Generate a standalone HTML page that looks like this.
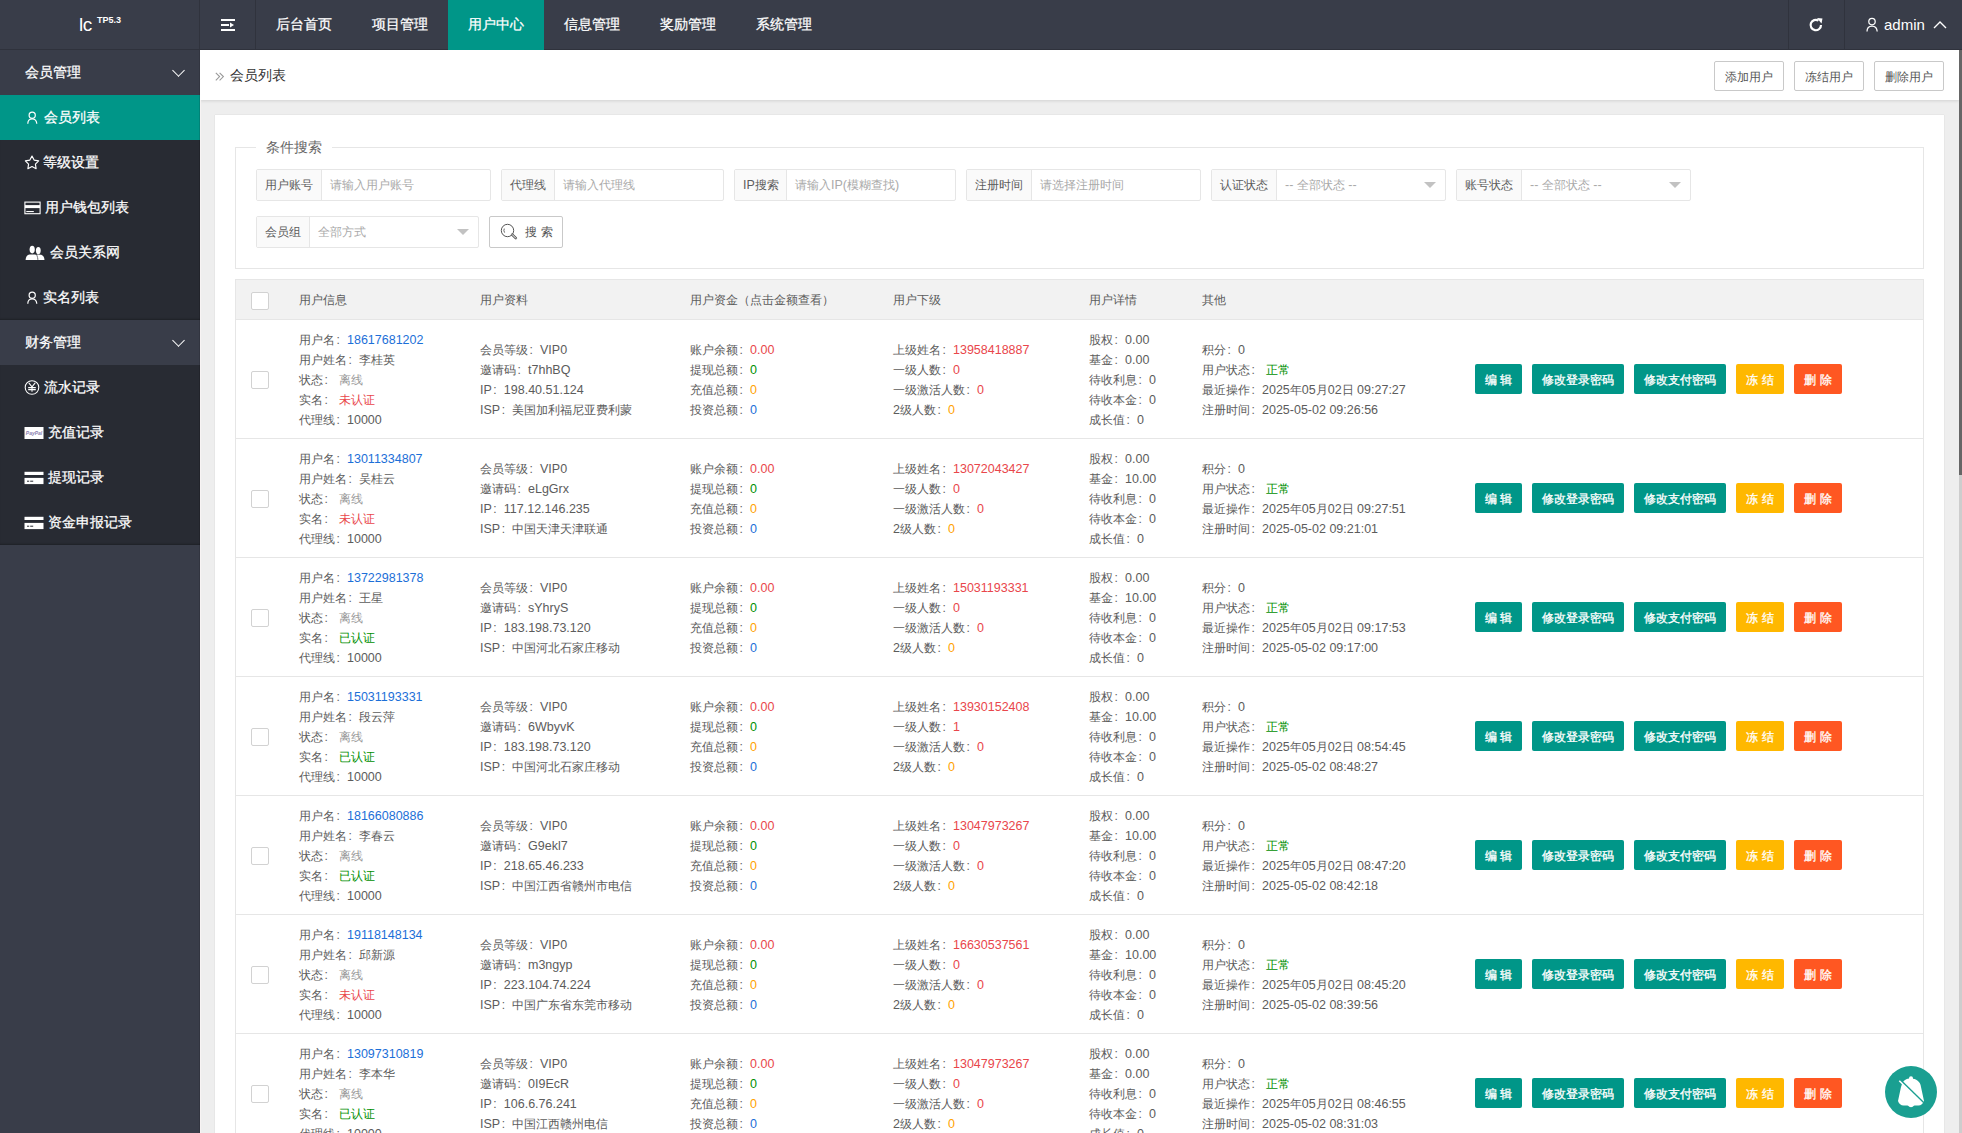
<!DOCTYPE html><html><head><meta charset="utf-8"><title>会员列表</title><style>
*{box-sizing:border-box;margin:0;padding:0}
html,body{width:1962px;height:1133px;overflow:hidden}
body{position:relative;background:#eeeeee;font-family:"Liberation Sans",sans-serif;color:#5c5c5c;font-size:12px}
.abs{position:absolute}
#hdr{left:0;top:0;width:1962px;height:50px;background:#393D49;border-bottom:1px solid #2f323c}
#logo{left:0;top:0;width:200px;height:49px;color:#fff}
#logo .l{position:absolute;left:79px;top:14px;font-size:19px;line-height:22px;letter-spacing:-0.5px}
#logo .v{position:absolute;left:97px;top:14px;font-size:9px;line-height:12px;font-weight:bold}
.vsep{position:absolute;top:0;width:1px;height:49px;background:#30333d}
.nav{position:absolute;top:0;height:49px;line-height:49px;color:#fff;font-size:14px;text-align:center;width:96px;-webkit-text-stroke:0.25px #fff}
.nav.on{background:#009688;height:50px}
#side{left:0;top:50px;width:200px;height:1083px;background:#393D49}
.grp{position:absolute;left:0;width:200px;height:45px;line-height:45px;color:#fff;font-size:14px;padding-left:25px;-webkit-text-stroke:0.25px #fff}
.grp .chev{position:absolute;left:173.5px;top:16px;width:9px;height:9px;border-right:1.5px solid #fff;border-bottom:1.5px solid #fff;transform:rotate(45deg)}
.sub{position:absolute;left:0;width:200px;background:#282B33;box-shadow:inset 0 -2px 2px -1px rgba(0,0,0,.25)}
.it{position:absolute;left:0;width:200px;height:45px;line-height:45px;color:#fff;font-size:14px}
.it.on{background:#009688}
.it svg{position:absolute}
.it span{position:absolute;top:0;-webkit-text-stroke:0.25px #fff}
#main{left:200px;top:50px;width:1759px;height:1083px;background:#eeeeee;overflow:hidden}
#crumb{position:absolute;left:0;top:0;width:1759px;height:50px;background:#fff;box-shadow:0 1px 3px rgba(0,0,0,.12)}
#crumb .t{position:absolute;left:30px;top:0;line-height:50px;font-size:14px;color:#333}
#crumb .r{position:absolute;left:15px;top:0;line-height:50px;font-size:14px;color:#999}
.tb{position:absolute;top:11px;height:30px;width:70px;border:1px solid #c9c9c9;background:#fff;line-height:30px;text-align:center;font-size:12px;color:#555;border-radius:2px}
#card{position:absolute;left:15px;top:65px;width:1729px;height:1100px;background:#fff;box-shadow:0 0 1px rgba(0,0,0,.18)}
#fs{position:absolute;left:20px;top:32px;width:1689px;height:122px;border:1px solid #e6e6e6}
#legend{position:absolute;left:20px;top:-11px;padding:0 10px;background:#fff;font-size:14px;line-height:20px;color:#666}
.ip{position:absolute;height:32px;border:1px solid #e6e6e6;border-radius:2px;background:#fff}
.ip .lb{position:absolute;left:0;top:0;height:30px;line-height:31px;background:#fafafa;border-right:1px solid #e6e6e6;color:#5c5c5c;padding-left:8px;font-size:12px}
.ip .ph{position:absolute;top:0;line-height:31px;color:#aaa;font-size:12px}
.ip .tri{position:absolute;top:12px;width:0;height:0;border-left:6px solid transparent;border-right:6px solid transparent;border-top:6px solid #c2c2c2}
#sbtn{position:absolute;left:274px;top:101px;width:74px;height:32px;border:1px solid #c9c9c9;border-radius:2px;background:#fff;color:#555;font-size:12px}
#tbl{position:absolute;left:20px;top:164px;width:1689px;border:1px solid #e6e6e6;border-bottom:none}
.th{position:relative;height:40px;background:#f2f2f2;border-bottom:1px solid #e6e6e6}
.tr{position:relative;height:119px;border-bottom:1px solid #e6e6e6;background:#fff}
.ck{position:absolute;left:15px;width:18px;height:18px;border:1px solid #d2d2d2;border-radius:2px;background:#fff}
.hc{position:absolute;top:1px;line-height:39px;font-size:12px;color:#5c5c5c}
.cell{position:absolute;line-height:20px;font-size:12px;color:#5c5c5c;white-space:nowrap}
.blue{color:#1c6fd8}
.red{color:#e9464b}
.green{color:#008f00}
.org{color:#ffa200}
.gray{color:#999}
.l{font-size:12.5px}
.c{display:inline-block;width:12px;font-style:normal;padding-left:1.5px}
.btn{position:absolute;height:30px;line-height:32px;color:#fff;font-size:12px;text-align:center;border-radius:2px;-webkit-text-stroke:0.3px #fff}
.bt{background:#009688}
.by{background:#FFB800}
.br{background:#FF5722}
#sb{left:1959px;top:50px;width:3px;height:1083px;background:#cdcdcd}
#sbt{left:1959px;top:50px;width:3px;height:425px;background:#666}
#fab{left:1885px;top:1066px;width:52px;height:52px;border-radius:50%;background:#1a9f91}
</style></head><body>
<div id="hdr" class="abs">
<div id="logo" class="abs"><span class="l">lc</span><span class="v">TP5.3</span></div>
<div class="vsep" style="left:199px"></div><div class="vsep" style="left:255px"></div>
<svg class="abs" style="left:221px;top:18px" width="16" height="14" viewBox="0 0 16 14"><rect x="0" y="1" width="14" height="2" fill="#fff"/><rect x="0" y="6" width="8" height="2" fill="#fff"/><path d="M9 4.5 L13 7 L9 9.5Z" fill="#fff"/><rect x="0" y="11" width="14" height="2" fill="#fff"/></svg>
<div class="nav" style="left:256px">后台首页</div>
<div class="nav" style="left:352px">项目管理</div>
<div class="nav on" style="left:448px">用户中心</div>
<div class="nav" style="left:544px">信息管理</div>
<div class="nav" style="left:640px">奖励管理</div>
<div class="nav" style="left:736px">系统管理</div>
<div class="vsep" style="left:1788px"></div><div class="vsep" style="left:1844px"></div>
<svg class="abs" style="left:1808px;top:17px" width="16" height="16" viewBox="0 0 16 16"><path d="M13 8 A5.2 5.2 0 1 1 10.5 3.6" fill="none" stroke="#fff" stroke-width="2.2"/><path d="M9 1 L14.5 1.5 L13.5 6.5Z" fill="#fff"/></svg>
<svg class="abs" style="left:1865px;top:17px" width="14" height="15" viewBox="0 0 14 15"><circle cx="7" cy="4.6" r="3.2" fill="none" stroke="#fff" stroke-width="1.25"/><path d="M2 14.5 C2 11 4 9 7 9 C10 9 12 11 12.2 14.5" fill="none" stroke="#fff" stroke-width="1.25"/></svg>
<div class="abs" style="left:1884px;top:0;line-height:49px;font-size:15px;color:#fff">admin</div>
<svg class="abs" style="left:1933px;top:20px" width="14" height="9" viewBox="0 0 14 9"><path d="M1 8 L7 2 L13 8" fill="none" stroke="#fff" stroke-width="1.4"/></svg>
</div>
<div id="side" class="abs">
<div class="grp" style="top:0">会员管理<i class="chev"></i></div>
<div class="sub" style="top:45px;height:225px"></div>
<div class="it on" style="top:45px"><svg style="position:absolute;left:24px;top:14px" width="16" height="17" viewBox="24 109 16 17"><circle cx="32.2" cy="115.2" r="3.1" fill="none" stroke="#fff" stroke-width="1.2"/><path d="M27.8 123.8 C27.8 120.6 29.6 119 32.2 119 C34.8 119 36.6 120.6 36.8 123.8" fill="none" stroke="#fff" stroke-width="1.2"/></svg><span style="left:44px">会员列表</span></div>
<div class="it" style="top:90px"><svg style="position:absolute;left:23px;top:13px" width="18" height="18" viewBox="23 153 18 18"><path d="M32.00 156.00 L34.12 160.09 L38.66 160.84 L35.42 164.11 L36.11 168.66 L32.00 166.60 L27.89 168.66 L28.58 164.11 L25.34 160.84 L29.88 160.09Z" fill="none" stroke="#fff" stroke-width="1.15" stroke-linejoin="round"/></svg><span style="left:43px">等级设置</span></div>
<div class="it" style="top:135px"><svg style="position:absolute;left:23px;top:15px" width="19" height="16" viewBox="23 200 19 16"><rect x="24.9" y="202.1" width="15.2" height="11.6" fill="none" stroke="#fff" stroke-width="1.1"/><rect x="25" y="205.1" width="15" height="3" fill="#fff"/><rect x="26.3" y="211" width="7.5" height="1.1" fill="#fff"/></svg><span style="left:45px">用户钱包列表</span></div>
<div class="it" style="top:180px"><svg style="position:absolute;left:24px;top:14px" width="22" height="17" viewBox="24 244 22 17"><ellipse cx="38.3" cy="250.6" rx="2.4" ry="3.6" fill="#fff"/><path d="M36.5 254.6 L41.2 254.8 C43.2 255.4 44.3 257 44.5 259.9 L39 259.9 Z" fill="#fff"/><ellipse cx="32.2" cy="249.6" rx="2.6" ry="3.8" fill="#fff"/><path d="M25.6 259.9 C25.7 256.8 27 254.8 29.5 254.4 L35 254.4 C37.5 254.8 38.8 256.8 39 259.9 Z" fill="#fff"/><path d="M35.6 253.5 C36.8 254.8 37.6 256 37.8 259.9" fill="none" stroke="#282B33" stroke-width="0.6"/></svg><span style="left:50px">会员关系网</span></div>
<div class="it" style="top:225px"><svg style="position:absolute;left:24px;top:14px" width="16" height="17" viewBox="24 289 16 17"><circle cx="32.2" cy="295.2" r="3.1" fill="none" stroke="#fff" stroke-width="1.2"/><path d="M27.8 303.8 C27.8 300.6 29.6 299 32.2 299 C34.8 299 36.6 300.6 36.8 303.8" fill="none" stroke="#fff" stroke-width="1.2"/></svg><span style="left:43px">实名列表</span></div>
<div class="grp" style="top:270px">财务管理<i class="chev"></i></div>
<div class="sub" style="top:315px;height:180px"></div>
<div class="it" style="top:315px"><svg style="position:absolute;left:23px;top:13px" width="18" height="19" viewBox="23 378 18 19"><circle cx="32" cy="387.5" r="6.8" fill="none" stroke="#fff" stroke-width="1.05"/><path d="M28.8 382.8 L32 386.8 L35.2 382.8 M32 386.8 L32 391.8 M28.2 387.6 H35.8 M28.2 389.6 H35.8" fill="none" stroke="#fff" stroke-width="1.05"/></svg><span style="left:44px">流水记录</span></div>
<div class="it" style="top:360px"><svg style="position:absolute;left:24px;top:16px" width="20" height="14" viewBox="24 426 20 14"><rect x="24.5" y="427" width="19" height="12" fill="#fff"/><text x="34" y="434.6" font-size="5" font-weight="bold" text-anchor="middle" fill="#8a7fb0" font-family="Liberation Sans" font-style="italic">PayPal</text></svg><span style="left:48px">充值记录</span></div>
<div class="it" style="top:405px"><svg style="position:absolute;left:24px;top:15px" width="20" height="16" viewBox="24 470 20 16"><rect x="24.5" y="471.8" width="19" height="3.2" fill="#fff"/><rect x="24.5" y="477.9" width="19" height="6.2" fill="#fff"/><rect x="27" y="480.7" width="2.2" height="1" fill="#282B33"/><rect x="30.2" y="480.7" width="3" height="1" fill="#282B33"/></svg><span style="left:48px">提现记录</span></div>
<div class="it" style="top:450px"><svg style="position:absolute;left:24px;top:15px" width="20" height="16" viewBox="24 515 20 16"><rect x="24.5" y="516.8" width="19" height="3.2" fill="#fff"/><rect x="24.5" y="522.9" width="19" height="6.2" fill="#fff"/><rect x="27" y="525.7" width="2.2" height="1" fill="#282B33"/><rect x="30.2" y="525.7" width="3" height="1" fill="#282B33"/></svg><span style="left:48px">资金申报记录</span></div>
</div>
<div id="main" class="abs">
<div id="crumb"><svg class="abs" style="left:15px;top:22px" width="10" height="10" viewBox="0 0 10 10"><path d="M0.8 0.8 L4.6 4.6 L0.8 8.4 M4.6 0.8 L8.4 4.6 L4.6 8.4" fill="none" stroke="#999" stroke-width="1.1"/></svg><span class="t">会员列表</span>
<div class="tb" style="left:1514px">添加用户</div>
<div class="tb" style="left:1594px">冻结用户</div>
<div class="tb" style="left:1674px">删除用户</div>
</div>
<div id="card">
<div id="fs"><div id="legend">条件搜索</div></div>
<div class="ip" style="left:41px;top:54px;width:235px"><div class="lb" style="width:65px">用户账号</div><div class="ph" style="left:73px">请输入用户账号</div></div>
<div class="ip" style="left:286px;top:54px;width:223px"><div class="lb" style="width:53px">代理线</div><div class="ph" style="left:61px">请输入代理线</div></div>
<div class="ip" style="left:519px;top:54px;width:222px"><div class="lb" style="width:52px"><span class="l">IP</span>搜索</div><div class="ph" style="left:60px">请输入<span class="l">IP(</span>模糊查找<span class="l">)</span></div></div>
<div class="ip" style="left:751px;top:54px;width:235px"><div class="lb" style="width:65px">注册时间</div><div class="ph" style="left:73px">请选择注册时间</div></div>
<div class="ip" style="left:996px;top:54px;width:235px"><div class="lb" style="width:65px">认证状态</div><div class="ph" style="left:73px"><span class="l">-- </span>全部状态<span class="l"> --</span></div><div class="tri" style="left:212px"></div></div>
<div class="ip" style="left:1241px;top:54px;width:235px"><div class="lb" style="width:65px">账号状态</div><div class="ph" style="left:73px"><span class="l">-- </span>全部状态<span class="l"> --</span></div><div class="tri" style="left:212px"></div></div>
<div class="ip" style="left:41px;top:101px;width:223px"><div class="lb" style="width:53px">会员组</div><div class="ph" style="left:61px">全部方式</div><div class="tri" style="left:200px"></div></div>
<div id="sbtn"><svg class="abs" style="left:10px;top:6px" width="18" height="18" viewBox="0 0 18 18"><circle cx="7.5" cy="7.5" r="6.2" fill="none" stroke="#555" stroke-width="1"/><path d="M4.3 5.6 A4 4 0 0 0 4.6 9.6" fill="none" stroke="#555" stroke-width="0.9"/><path d="M12.2 11.6 L15.8 15.2" stroke="#555" stroke-width="2.6" stroke-linecap="round"/><path d="M12.2 11.6 L15.8 15.2" stroke="#fff" stroke-width="1" stroke-linecap="round"/></svg><span class="abs" style="left:35px;top:0;line-height:30px;letter-spacing:4px">搜索</span></div>
<div id="tbl">
<div class="th"><div class="ck" style="top:12px"></div>
<div class="hc" style="left:63px">用户信息</div>
<div class="hc" style="left:244px">用户资料</div>
<div class="hc" style="left:454px">用户资金（点击金额查看）</div>
<div class="hc" style="left:657px">用户下级</div>
<div class="hc" style="left:853px">用户详情</div>
<div class="hc" style="left:966px">其他</div>
</div>
<div class="tr"><div class="ck" style="top:51px"></div>
<div class="cell" style="left:63px;top:10px">用户名<i class="c">:</i><span class="blue"><span class="l">18617681202</span></span><br>用户姓名<i class="c">:</i>李桂英<br>状态<i class="c">:</i><span class="gray" style="margin-left:4px">离线</span><br>实名<i class="c">:</i><span style="margin-left:4px"></span><span class="red">未认证</span><br>代理线<i class="c">:</i><span class="l">10000</span></div>
<div class="cell" style="left:244px;top:20px">会员等级<i class="c">:</i><span class="l">VIP0</span><br>邀请码<i class="c">:</i><span class="l">t7hhBQ</span><br><span class="l">IP</span><i class="c">:</i><span class="l">198.40.51.124</span><br><span class="l">ISP</span><i class="c">:</i>美国加利福尼亚费利蒙</div>
<div class="cell" style="left:454px;top:20px">账户余额<i class="c">:</i><span class="red"><span class="l">0.00</span></span><br>提现总额<i class="c">:</i><span class="green"><span class="l">0</span></span><br>充值总额<i class="c">:</i><span class="org"><span class="l">0</span></span><br>投资总额<i class="c">:</i><span class="blue"><span class="l">0</span></span></div>
<div class="cell" style="left:657px;top:20px">上级姓名<i class="c">:</i><span class="red"><span class="l">13958418887</span></span><br>一级人数<i class="c">:</i><span class="red"><span class="l">0</span></span><br>一级激活人数<i class="c">:</i><span class="red"><span class="l">0</span></span><br><span class="l">2</span>级人数<i class="c">:</i><span class="org"><span class="l">0</span></span></div>
<div class="cell" style="left:853px;top:10px">股权<i class="c">:</i><span class="l">0.00</span><br>基金<i class="c">:</i><span class="l">0.00</span><br>待收利息<i class="c">:</i><span class="l">0</span><br>待收本金<i class="c">:</i><span class="l">0</span><br>成长值<i class="c">:</i><span class="l">0</span></div>
<div class="cell" style="left:966px;top:20px">积分<i class="c">:</i><span class="l">0</span><br>用户状态<i class="c">:</i><span class="green" style="margin-left:4px">正常</span><br>最近操作<i class="c">:</i><span class="l">2025</span>年<span class="l">05</span>月<span class="l">02</span>日<span class="l"> 09:27:27</span><br>注册时间<i class="c">:</i><span class="l">2025-05-02 09:26:56</span></div>
<div class="btn bt" style="left:1239px;top:44px;width:47px">编 辑</div>
<div class="btn bt" style="left:1296px;top:44px;width:92px">修改登录密码</div>
<div class="btn bt" style="left:1398px;top:44px;width:92px">修改支付密码</div>
<div class="btn by" style="left:1500px;top:44px;width:48px">冻 结</div>
<div class="btn br" style="left:1558px;top:44px;width:48px">删 除</div>
</div>
<div class="tr"><div class="ck" style="top:51px"></div>
<div class="cell" style="left:63px;top:10px">用户名<i class="c">:</i><span class="blue"><span class="l">13011334807</span></span><br>用户姓名<i class="c">:</i>吴桂云<br>状态<i class="c">:</i><span class="gray" style="margin-left:4px">离线</span><br>实名<i class="c">:</i><span style="margin-left:4px"></span><span class="red">未认证</span><br>代理线<i class="c">:</i><span class="l">10000</span></div>
<div class="cell" style="left:244px;top:20px">会员等级<i class="c">:</i><span class="l">VIP0</span><br>邀请码<i class="c">:</i><span class="l">eLgGrx</span><br><span class="l">IP</span><i class="c">:</i><span class="l">117.12.146.235</span><br><span class="l">ISP</span><i class="c">:</i>中国天津天津联通</div>
<div class="cell" style="left:454px;top:20px">账户余额<i class="c">:</i><span class="red"><span class="l">0.00</span></span><br>提现总额<i class="c">:</i><span class="green"><span class="l">0</span></span><br>充值总额<i class="c">:</i><span class="org"><span class="l">0</span></span><br>投资总额<i class="c">:</i><span class="blue"><span class="l">0</span></span></div>
<div class="cell" style="left:657px;top:20px">上级姓名<i class="c">:</i><span class="red"><span class="l">13072043427</span></span><br>一级人数<i class="c">:</i><span class="red"><span class="l">0</span></span><br>一级激活人数<i class="c">:</i><span class="red"><span class="l">0</span></span><br><span class="l">2</span>级人数<i class="c">:</i><span class="org"><span class="l">0</span></span></div>
<div class="cell" style="left:853px;top:10px">股权<i class="c">:</i><span class="l">0.00</span><br>基金<i class="c">:</i><span class="l">10.00</span><br>待收利息<i class="c">:</i><span class="l">0</span><br>待收本金<i class="c">:</i><span class="l">0</span><br>成长值<i class="c">:</i><span class="l">0</span></div>
<div class="cell" style="left:966px;top:20px">积分<i class="c">:</i><span class="l">0</span><br>用户状态<i class="c">:</i><span class="green" style="margin-left:4px">正常</span><br>最近操作<i class="c">:</i><span class="l">2025</span>年<span class="l">05</span>月<span class="l">02</span>日<span class="l"> 09:27:51</span><br>注册时间<i class="c">:</i><span class="l">2025-05-02 09:21:01</span></div>
<div class="btn bt" style="left:1239px;top:44px;width:47px">编 辑</div>
<div class="btn bt" style="left:1296px;top:44px;width:92px">修改登录密码</div>
<div class="btn bt" style="left:1398px;top:44px;width:92px">修改支付密码</div>
<div class="btn by" style="left:1500px;top:44px;width:48px">冻 结</div>
<div class="btn br" style="left:1558px;top:44px;width:48px">删 除</div>
</div>
<div class="tr"><div class="ck" style="top:51px"></div>
<div class="cell" style="left:63px;top:10px">用户名<i class="c">:</i><span class="blue"><span class="l">13722981378</span></span><br>用户姓名<i class="c">:</i>王星<br>状态<i class="c">:</i><span class="gray" style="margin-left:4px">离线</span><br>实名<i class="c">:</i><span style="margin-left:4px"></span><span class="green">已认证</span><br>代理线<i class="c">:</i><span class="l">10000</span></div>
<div class="cell" style="left:244px;top:20px">会员等级<i class="c">:</i><span class="l">VIP0</span><br>邀请码<i class="c">:</i><span class="l">sYhryS</span><br><span class="l">IP</span><i class="c">:</i><span class="l">183.198.73.120</span><br><span class="l">ISP</span><i class="c">:</i>中国河北石家庄移动</div>
<div class="cell" style="left:454px;top:20px">账户余额<i class="c">:</i><span class="red"><span class="l">0.00</span></span><br>提现总额<i class="c">:</i><span class="green"><span class="l">0</span></span><br>充值总额<i class="c">:</i><span class="org"><span class="l">0</span></span><br>投资总额<i class="c">:</i><span class="blue"><span class="l">0</span></span></div>
<div class="cell" style="left:657px;top:20px">上级姓名<i class="c">:</i><span class="red"><span class="l">15031193331</span></span><br>一级人数<i class="c">:</i><span class="red"><span class="l">0</span></span><br>一级激活人数<i class="c">:</i><span class="red"><span class="l">0</span></span><br><span class="l">2</span>级人数<i class="c">:</i><span class="org"><span class="l">0</span></span></div>
<div class="cell" style="left:853px;top:10px">股权<i class="c">:</i><span class="l">0.00</span><br>基金<i class="c">:</i><span class="l">10.00</span><br>待收利息<i class="c">:</i><span class="l">0</span><br>待收本金<i class="c">:</i><span class="l">0</span><br>成长值<i class="c">:</i><span class="l">0</span></div>
<div class="cell" style="left:966px;top:20px">积分<i class="c">:</i><span class="l">0</span><br>用户状态<i class="c">:</i><span class="green" style="margin-left:4px">正常</span><br>最近操作<i class="c">:</i><span class="l">2025</span>年<span class="l">05</span>月<span class="l">02</span>日<span class="l"> 09:17:53</span><br>注册时间<i class="c">:</i><span class="l">2025-05-02 09:17:00</span></div>
<div class="btn bt" style="left:1239px;top:44px;width:47px">编 辑</div>
<div class="btn bt" style="left:1296px;top:44px;width:92px">修改登录密码</div>
<div class="btn bt" style="left:1398px;top:44px;width:92px">修改支付密码</div>
<div class="btn by" style="left:1500px;top:44px;width:48px">冻 结</div>
<div class="btn br" style="left:1558px;top:44px;width:48px">删 除</div>
</div>
<div class="tr"><div class="ck" style="top:51px"></div>
<div class="cell" style="left:63px;top:10px">用户名<i class="c">:</i><span class="blue"><span class="l">15031193331</span></span><br>用户姓名<i class="c">:</i>段云萍<br>状态<i class="c">:</i><span class="gray" style="margin-left:4px">离线</span><br>实名<i class="c">:</i><span style="margin-left:4px"></span><span class="green">已认证</span><br>代理线<i class="c">:</i><span class="l">10000</span></div>
<div class="cell" style="left:244px;top:20px">会员等级<i class="c">:</i><span class="l">VIP0</span><br>邀请码<i class="c">:</i><span class="l">6WbyvK</span><br><span class="l">IP</span><i class="c">:</i><span class="l">183.198.73.120</span><br><span class="l">ISP</span><i class="c">:</i>中国河北石家庄移动</div>
<div class="cell" style="left:454px;top:20px">账户余额<i class="c">:</i><span class="red"><span class="l">0.00</span></span><br>提现总额<i class="c">:</i><span class="green"><span class="l">0</span></span><br>充值总额<i class="c">:</i><span class="org"><span class="l">0</span></span><br>投资总额<i class="c">:</i><span class="blue"><span class="l">0</span></span></div>
<div class="cell" style="left:657px;top:20px">上级姓名<i class="c">:</i><span class="red"><span class="l">13930152408</span></span><br>一级人数<i class="c">:</i><span class="red"><span class="l">1</span></span><br>一级激活人数<i class="c">:</i><span class="red"><span class="l">0</span></span><br><span class="l">2</span>级人数<i class="c">:</i><span class="org"><span class="l">0</span></span></div>
<div class="cell" style="left:853px;top:10px">股权<i class="c">:</i><span class="l">0.00</span><br>基金<i class="c">:</i><span class="l">10.00</span><br>待收利息<i class="c">:</i><span class="l">0</span><br>待收本金<i class="c">:</i><span class="l">0</span><br>成长值<i class="c">:</i><span class="l">0</span></div>
<div class="cell" style="left:966px;top:20px">积分<i class="c">:</i><span class="l">0</span><br>用户状态<i class="c">:</i><span class="green" style="margin-left:4px">正常</span><br>最近操作<i class="c">:</i><span class="l">2025</span>年<span class="l">05</span>月<span class="l">02</span>日<span class="l"> 08:54:45</span><br>注册时间<i class="c">:</i><span class="l">2025-05-02 08:48:27</span></div>
<div class="btn bt" style="left:1239px;top:44px;width:47px">编 辑</div>
<div class="btn bt" style="left:1296px;top:44px;width:92px">修改登录密码</div>
<div class="btn bt" style="left:1398px;top:44px;width:92px">修改支付密码</div>
<div class="btn by" style="left:1500px;top:44px;width:48px">冻 结</div>
<div class="btn br" style="left:1558px;top:44px;width:48px">删 除</div>
</div>
<div class="tr"><div class="ck" style="top:51px"></div>
<div class="cell" style="left:63px;top:10px">用户名<i class="c">:</i><span class="blue"><span class="l">18166080886</span></span><br>用户姓名<i class="c">:</i>李春云<br>状态<i class="c">:</i><span class="gray" style="margin-left:4px">离线</span><br>实名<i class="c">:</i><span style="margin-left:4px"></span><span class="green">已认证</span><br>代理线<i class="c">:</i><span class="l">10000</span></div>
<div class="cell" style="left:244px;top:20px">会员等级<i class="c">:</i><span class="l">VIP0</span><br>邀请码<i class="c">:</i><span class="l">G9ekl7</span><br><span class="l">IP</span><i class="c">:</i><span class="l">218.65.46.233</span><br><span class="l">ISP</span><i class="c">:</i>中国江西省赣州市电信</div>
<div class="cell" style="left:454px;top:20px">账户余额<i class="c">:</i><span class="red"><span class="l">0.00</span></span><br>提现总额<i class="c">:</i><span class="green"><span class="l">0</span></span><br>充值总额<i class="c">:</i><span class="org"><span class="l">0</span></span><br>投资总额<i class="c">:</i><span class="blue"><span class="l">0</span></span></div>
<div class="cell" style="left:657px;top:20px">上级姓名<i class="c">:</i><span class="red"><span class="l">13047973267</span></span><br>一级人数<i class="c">:</i><span class="red"><span class="l">0</span></span><br>一级激活人数<i class="c">:</i><span class="red"><span class="l">0</span></span><br><span class="l">2</span>级人数<i class="c">:</i><span class="org"><span class="l">0</span></span></div>
<div class="cell" style="left:853px;top:10px">股权<i class="c">:</i><span class="l">0.00</span><br>基金<i class="c">:</i><span class="l">10.00</span><br>待收利息<i class="c">:</i><span class="l">0</span><br>待收本金<i class="c">:</i><span class="l">0</span><br>成长值<i class="c">:</i><span class="l">0</span></div>
<div class="cell" style="left:966px;top:20px">积分<i class="c">:</i><span class="l">0</span><br>用户状态<i class="c">:</i><span class="green" style="margin-left:4px">正常</span><br>最近操作<i class="c">:</i><span class="l">2025</span>年<span class="l">05</span>月<span class="l">02</span>日<span class="l"> 08:47:20</span><br>注册时间<i class="c">:</i><span class="l">2025-05-02 08:42:18</span></div>
<div class="btn bt" style="left:1239px;top:44px;width:47px">编 辑</div>
<div class="btn bt" style="left:1296px;top:44px;width:92px">修改登录密码</div>
<div class="btn bt" style="left:1398px;top:44px;width:92px">修改支付密码</div>
<div class="btn by" style="left:1500px;top:44px;width:48px">冻 结</div>
<div class="btn br" style="left:1558px;top:44px;width:48px">删 除</div>
</div>
<div class="tr"><div class="ck" style="top:51px"></div>
<div class="cell" style="left:63px;top:10px">用户名<i class="c">:</i><span class="blue"><span class="l">19118148134</span></span><br>用户姓名<i class="c">:</i>邱新源<br>状态<i class="c">:</i><span class="gray" style="margin-left:4px">离线</span><br>实名<i class="c">:</i><span style="margin-left:4px"></span><span class="red">未认证</span><br>代理线<i class="c">:</i><span class="l">10000</span></div>
<div class="cell" style="left:244px;top:20px">会员等级<i class="c">:</i><span class="l">VIP0</span><br>邀请码<i class="c">:</i><span class="l">m3ngyp</span><br><span class="l">IP</span><i class="c">:</i><span class="l">223.104.74.224</span><br><span class="l">ISP</span><i class="c">:</i>中国广东省东莞市移动</div>
<div class="cell" style="left:454px;top:20px">账户余额<i class="c">:</i><span class="red"><span class="l">0.00</span></span><br>提现总额<i class="c">:</i><span class="green"><span class="l">0</span></span><br>充值总额<i class="c">:</i><span class="org"><span class="l">0</span></span><br>投资总额<i class="c">:</i><span class="blue"><span class="l">0</span></span></div>
<div class="cell" style="left:657px;top:20px">上级姓名<i class="c">:</i><span class="red"><span class="l">16630537561</span></span><br>一级人数<i class="c">:</i><span class="red"><span class="l">0</span></span><br>一级激活人数<i class="c">:</i><span class="red"><span class="l">0</span></span><br><span class="l">2</span>级人数<i class="c">:</i><span class="org"><span class="l">0</span></span></div>
<div class="cell" style="left:853px;top:10px">股权<i class="c">:</i><span class="l">0.00</span><br>基金<i class="c">:</i><span class="l">10.00</span><br>待收利息<i class="c">:</i><span class="l">0</span><br>待收本金<i class="c">:</i><span class="l">0</span><br>成长值<i class="c">:</i><span class="l">0</span></div>
<div class="cell" style="left:966px;top:20px">积分<i class="c">:</i><span class="l">0</span><br>用户状态<i class="c">:</i><span class="green" style="margin-left:4px">正常</span><br>最近操作<i class="c">:</i><span class="l">2025</span>年<span class="l">05</span>月<span class="l">02</span>日<span class="l"> 08:45:20</span><br>注册时间<i class="c">:</i><span class="l">2025-05-02 08:39:56</span></div>
<div class="btn bt" style="left:1239px;top:44px;width:47px">编 辑</div>
<div class="btn bt" style="left:1296px;top:44px;width:92px">修改登录密码</div>
<div class="btn bt" style="left:1398px;top:44px;width:92px">修改支付密码</div>
<div class="btn by" style="left:1500px;top:44px;width:48px">冻 结</div>
<div class="btn br" style="left:1558px;top:44px;width:48px">删 除</div>
</div>
<div class="tr"><div class="ck" style="top:51px"></div>
<div class="cell" style="left:63px;top:10px">用户名<i class="c">:</i><span class="blue"><span class="l">13097310819</span></span><br>用户姓名<i class="c">:</i>李本华<br>状态<i class="c">:</i><span class="gray" style="margin-left:4px">离线</span><br>实名<i class="c">:</i><span style="margin-left:4px"></span><span class="green">已认证</span><br>代理线<i class="c">:</i><span class="l">10000</span></div>
<div class="cell" style="left:244px;top:20px">会员等级<i class="c">:</i><span class="l">VIP0</span><br>邀请码<i class="c">:</i><span class="l">0I9EcR</span><br><span class="l">IP</span><i class="c">:</i><span class="l">106.6.76.241</span><br><span class="l">ISP</span><i class="c">:</i>中国江西赣州电信</div>
<div class="cell" style="left:454px;top:20px">账户余额<i class="c">:</i><span class="red"><span class="l">0.00</span></span><br>提现总额<i class="c">:</i><span class="green"><span class="l">0</span></span><br>充值总额<i class="c">:</i><span class="org"><span class="l">0</span></span><br>投资总额<i class="c">:</i><span class="blue"><span class="l">0</span></span></div>
<div class="cell" style="left:657px;top:20px">上级姓名<i class="c">:</i><span class="red"><span class="l">13047973267</span></span><br>一级人数<i class="c">:</i><span class="red"><span class="l">0</span></span><br>一级激活人数<i class="c">:</i><span class="red"><span class="l">0</span></span><br><span class="l">2</span>级人数<i class="c">:</i><span class="org"><span class="l">0</span></span></div>
<div class="cell" style="left:853px;top:10px">股权<i class="c">:</i><span class="l">0.00</span><br>基金<i class="c">:</i><span class="l">0.00</span><br>待收利息<i class="c">:</i><span class="l">0</span><br>待收本金<i class="c">:</i><span class="l">0</span><br>成长值<i class="c">:</i><span class="l">0</span></div>
<div class="cell" style="left:966px;top:20px">积分<i class="c">:</i><span class="l">0</span><br>用户状态<i class="c">:</i><span class="green" style="margin-left:4px">正常</span><br>最近操作<i class="c">:</i><span class="l">2025</span>年<span class="l">05</span>月<span class="l">02</span>日<span class="l"> 08:46:55</span><br>注册时间<i class="c">:</i><span class="l">2025-05-02 08:31:03</span></div>
<div class="btn bt" style="left:1239px;top:44px;width:47px">编 辑</div>
<div class="btn bt" style="left:1296px;top:44px;width:92px">修改登录密码</div>
<div class="btn bt" style="left:1398px;top:44px;width:92px">修改支付密码</div>
<div class="btn by" style="left:1500px;top:44px;width:48px">冻 结</div>
<div class="btn br" style="left:1558px;top:44px;width:48px">删 除</div>
</div>
</div>
</div>
</div>
<div class="abs" style="left:199px;top:50px;width:1px;height:1083px;background:rgba(0,0,0,.12)"></div><div class="abs" style="left:200px;top:100px;width:1px;height:1033px;background:#f7f3f3"></div>
<div id="sb" class="abs"></div><div id="sbt" class="abs"></div>
<div id="fab" class="abs"><svg class="abs" style="left:0px;top:0px" width="52" height="52" viewBox="0 0 52 52"><circle cx="26" cy="12.2" r="2" fill="#fff"/><path d="M26 12.5 C21 12.5 18.2 14.5 17 18 L16 21 L13 35 C14 38 16 39.4 18.5 39.4 L33.5 39.4 C36 39.4 38 38 39 35 L36 21 C35.5 15.5 31 12.5 26 12.5Z" fill="#fff"/><path d="M22.5 39 Q26 43.5 29.5 39Z" fill="#fff"/><path d="M15.07 14.02 L38.6 37" stroke="#1a9f91" stroke-width="2.2"/><path d="M14.3 14.8 L37.4 37.3" stroke="#fff" stroke-width="1.6"/></svg></div>
</body></html>
